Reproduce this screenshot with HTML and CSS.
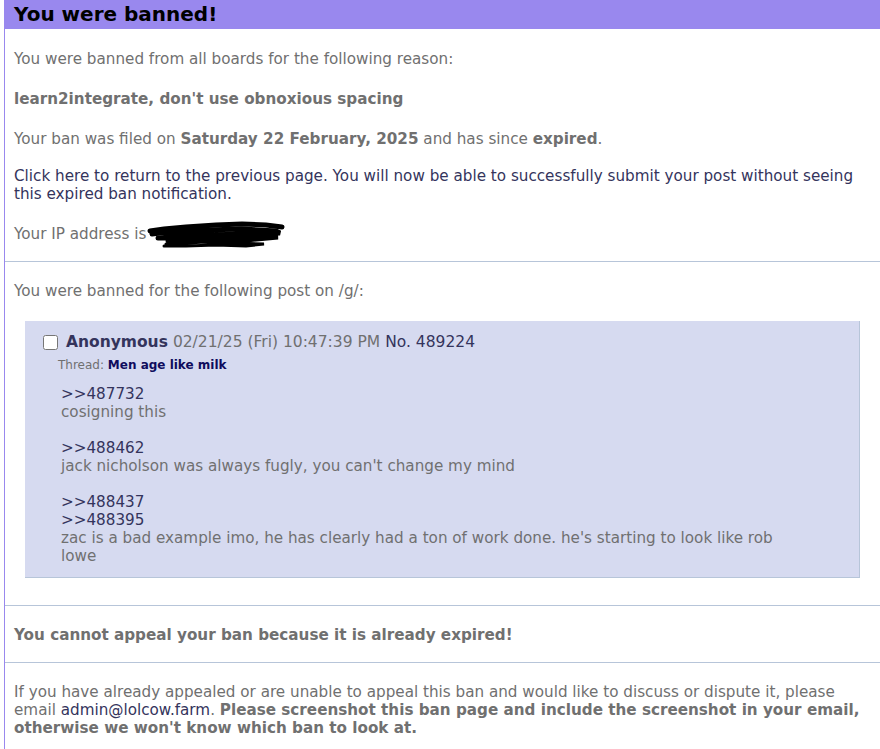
FILE: index.html
```html
<!DOCTYPE html>
<html lang="en">
<head>
    <meta charset="UTF-8">
    <meta name="viewport" content="width=device-width, initial-scale=1.0">
    <title>Banned!</title>
    <link rel="stylesheet" href="styles.css">
</head>
<body>
    <div class="ban">
        <h2>You were banned!</h2>
        <div class="section first">
            <p>You were banned from all boards for the following reason:</p>
            <p><b>learn2integrate, don't use obnoxious spacing</b></p>
            <p class="filed">Your ban was filed on <b>Saturday 22 February, 2025</b> and has since <b>expired</b>.</p>
            <p><a href="#">Click here to return to the previous page. You will now be able to successfully submit your post without seeing this expired ban notification.</a></p>
            <p>Your IP address is<span class="redact"><svg width="140" height="28" viewBox="0 0 140 28">
                <path d="M4 10 L18 8 L40 6 L70 4 L96 3 L120 4 L136 6" stroke="#000" stroke-width="5" fill="none" stroke-linecap="round"/>
                <path d="M6 13 L30 10 L60 9 L95 8 L130 10 L134 12 L100 13 L60 14 L20 15" stroke="#000" stroke-width="5" fill="none" stroke-linecap="round"/>
                <path d="M12 17 L50 15 L90 14 L132 16 L100 19 L60 19 L22 20" stroke="#000" stroke-width="5" fill="none" stroke-linecap="round"/>
                <path d="M20 23 L60 21 L90 22 L118 23 L100 25 L70 24 L40 25 L18 25" stroke="#000" stroke-width="3" fill="none" stroke-linecap="round"/>
            </svg></span></p>
        </div>
        <div class="section with-post">
            <p class="lead">You were banned for the following post on <a href="#" class="plain">/g/</a>:</p>
            <div class="post">
                <div class="intro">
                    <input type="checkbox" class="delete">
                    <span class="name">Anonymous</span>
                    <span class="time">02/21/25 (Fri) 10:47:39 PM</span>
                    <a href="#" class="postno">No. 489224</a>
                </div>
                <div class="thread">Thread: <b>Men age like milk</b></div>
                <div class="body">
                    <a href="#" class="quote">&gt;&gt;487732</a><br>
                    cosigning this<br>
                    <br>
                    <a href="#" class="quote">&gt;&gt;488462</a><br>
                    jack nicholson was always fugly, you can't change my mind<br>
                    <br>
                    <a href="#" class="quote">&gt;&gt;488437</a><br>
                    <a href="#" class="quote">&gt;&gt;488395</a><br>
                    zac is a bad example imo, he has clearly had a ton of work done. he's starting to look like rob lowe
                </div>
            </div>
        </div>
        <div class="section">
            <p><b>You cannot appeal your ban because it is already expired!</b></p>
        </div>
        <div class="section">
            <p>If you have already appealed or are unable to appeal this ban and would like to discuss or dispute it, please email <a href="#">admin@lolcow.farm</a>. <b>Please screenshot this ban page and include the screenshot in your email, otherwise we won't know which ban to look at.</b></p>
        </div>
    </div>
</body>
</html>
```

FILE: styles.css
```css
body {
    margin: 0;
    background-color: #fff;
    color: #707070;
    font-family: "DejaVu Sans", Verdana, sans-serif;
    font-size: 15.2px;
    line-height: 18px;
}
a {
    color: #34345c;
    text-decoration: none;
}
.ban {
    margin-left: 4px;
    border-left: 1px solid #9988ee;
}
.ban h2 {
    margin: 0;
    height: 29px;
    padding: 0 9px;
    background-color: #9988ee;
    color: #000;
    font-size: 20px;
    line-height: 29px;
    font-weight: bold;
}
.section {
    padding: 20px 14px 18px 9px;
    border-top: 1px solid #b7c5d9;
}
.section.first {
    padding-top: 21px;
    border-top: none;
}
.section.with-post {
    padding-bottom: 27px;
}
.section p {
    margin: 0 0 22px;
}
.section p:last-child {
    margin-bottom: 0;
}
.section p.filed {
    margin-bottom: 19px;
}
.section p.lead {
    margin-bottom: 21px;
}
.redact {
    display: inline-block;
    width: 136px;
    height: 18px;
    vertical-align: top;
    position: relative;
}
.redact svg {
    position: absolute;
    left: 0;
    top: -4px;
}
.plain {
    color: #707070;
}
.post {
    margin: 0 6px 0 11px;
    padding: 11px 0 12px 15px;
    background-color: #d6daf0;
    border-right: 1px solid #b7c5d9;
    border-bottom: 1px solid #b7c5d9;
}
.intro {
    display: flex;
    align-items: center;
    gap: 5px;
    font-size: 15.5px;
    line-height: 20px;
}
.delete {
    width: 15px;
    height: 15px;
    margin: 0 3px 0 3px;
}
.name {
    color: #34345c;
    font-weight: bold;
}
.postno {
    color: #34345c;
}
.thread {
    margin: 5px 0 0 18px;
    font-size: 12px;
    line-height: 16px;
}
.thread b {
    color: #0f0c5d;
}
.body {
    margin: 12px 60px 0 21px;
}
.quote {
    color: #34345c;
}
```
